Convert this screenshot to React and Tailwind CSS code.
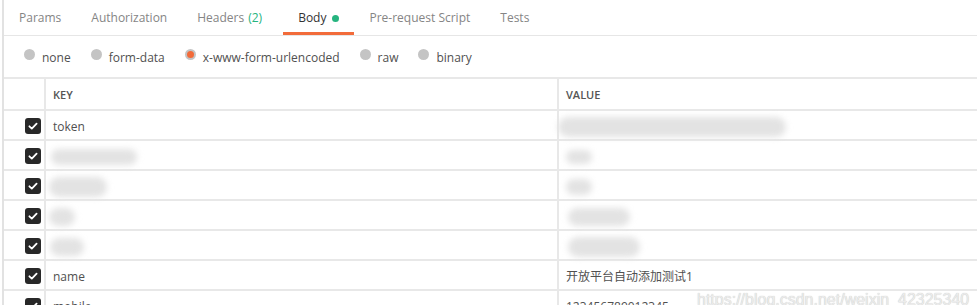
import React from "react";

const tabs = [
  { label: "Params" },
  { label: "Authorization" },
  { label: "Headers", count: "(2)" },
  { label: "Body", active: true, dot: true },
  { label: "Pre-request Script" },
  { label: "Tests" },
];

const bodyTypes = [
  { label: "none" },
  { label: "form-data" },
  { label: "x-www-form-urlencoded", checked: true },
  { label: "raw" },
  { label: "binary" },
];

function Check() {
  return (
    <span className="w-4 h-4 rounded-[3px] bg-[#282828] flex items-center justify-center shrink-0">
      <svg viewBox="0 0 16 16" className="w-3 h-3" fill="none">
        <path d="M3.2 8.4 L6.4 11.4 L12.8 4.8" stroke="#fff" strokeWidth="2.4" strokeLinecap="round" strokeLinejoin="round" />
      </svg>
    </span>
  );
}

// blurred/mosaic placeholder where values were hidden in the screenshot
function Smudge({ className }) {
  return <div className={"rounded-full bg-[#e3e3e3] blur-[3px] " + className} />;
}

function Row({ keyCell, valueCell }) {
  return (
    <div className="flex h-[30px] border-b-2 border-[#e8e8e8]">
      <div className="w-[42px] flex items-center pl-[21px] pt-[1px] border-r-2 border-[#e8e8e8]">
        <Check />
      </div>
      <div className="w-[513px] flex items-center pl-[7px] pt-[3px] border-r-2 border-[#e8e8e8] text-[12px] text-[#505050]">
        {keyCell}
      </div>
      <div className="flex-1 flex items-center pl-[7px] pt-[4px] text-[12px] text-[#505050]">{valueCell}</div>
    </div>
  );
}

export default function App() {
  return (
    <div
      className="relative w-[977px] h-[305px] overflow-hidden bg-white"
      style={{ fontFamily: '"Open Sans", "Noto Sans CJK SC", sans-serif' }}
    >
      <div className="ml-[2px] h-full border-l-2 border-[#e2e2e2]">
        {/* Tabs */}
        <div className="flex h-[36px] border-b border-[#e6e6e6] text-[12px]">
          {tabs.map((t) => (
            <div
              key={t.label}
              className={
                "px-[15px] pt-[4px] flex items-center border-b-[3px] " +
                (t.active ? "ml-[6px] border-[#f26b3a] text-[#333333]" : "border-transparent text-[#858585]")
              }
            >
              <span>{t.label}</span>
              {t.count && <span className="ml-[4px] text-[#26b47f]">{t.count}</span>}
              {t.dot && <span className="ml-[6px] w-[7px] h-[7px] rounded-full bg-[#26b47f]" />}
            </div>
          ))}
        </div>

        {/* Body type radios */}
        <div className="flex items-center h-[43px] pl-[20px] gap-[20px] border-b-2 border-[#e8e8e8] text-[12px] text-[#505050]">
          {bodyTypes.map((b) => (
            <div key={b.label} className="flex items-center gap-[7px]">
              <span className="w-[11px] h-[11px] -mt-[4px] rounded-full bg-[#c4c4c4] flex items-center justify-center">
                {b.checked && <span className="w-[7px] h-[7px] rounded-full bg-[#f26b3a]" />}
              </span>
              <span className="mt-[2px]">{b.label}</span>
            </div>
          ))}
        </div>

        {/* Table header */}
        <div className="flex h-[32px] border-b-2 border-[#e8e8e8] text-[11px] font-semibold text-[#555555]">
          <div className="w-[42px] border-r-2 border-[#e8e8e8]" />
          <div className="w-[513px] flex items-center pl-[7px] pt-[2px] border-r-2 border-[#e8e8e8]">KEY</div>
          <div className="flex-1 flex items-center pl-[7px] pt-[2px]">VALUE</div>
        </div>

        <Row keyCell="token" valueCell={<Smudge className="w-[228px] h-[20px] -ml-[8px]" />} />
        <Row keyCell={<Smudge className="w-[86px] h-[16px] ml-[-2px]" />} valueCell={<Smudge className="w-[26px] h-[14px]" />} />
        <Row keyCell={<Smudge className="w-[58px] h-[20px] ml-[-4px]" />} valueCell={<Smudge className="w-[26px] h-[16px]" />} />
        <Row keyCell={<Smudge className="w-[26px] h-[18px] ml-[-4px]" />} valueCell={<Smudge className="w-[62px] h-[18px] ml-[2px]" />} />
        <Row keyCell={<Smudge className="w-[34px] h-[18px] ml-[-3px]" />} valueCell={<Smudge className="w-[72px] h-[20px] ml-[2px]" />} />
        <Row keyCell="name" valueCell="开放平台自动添加测试1" />
        <Row keyCell="mobile" valueCell="123456789012345" />
      </div>

      {/* watermark */}
      <div
        className="absolute left-[697px] top-[288px] text-[16px] leading-[24px] text-[#ececec] whitespace-nowrap pointer-events-none"
        style={{ fontFamily: '"Liberation Sans", Arial, sans-serif', textShadow: "0 0 1px #b8b8b8" }}
      >
        https://blog.csdn.net/weixin_42325340
      </div>
    </div>
  );
}
